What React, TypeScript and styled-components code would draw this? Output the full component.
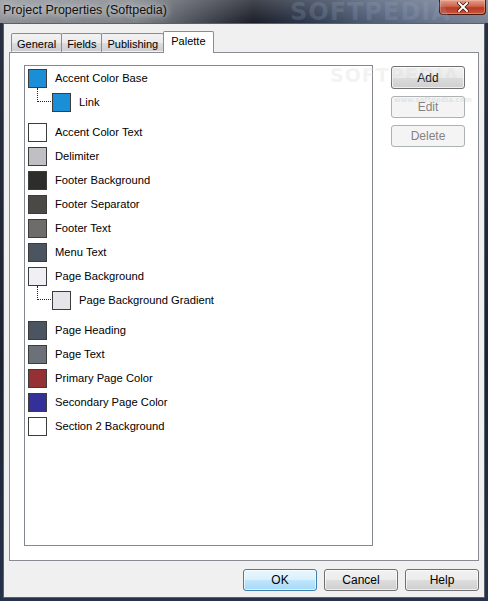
import React from 'react';
import styled, { createGlobalStyle } from 'styled-components';

const GlobalStyle = createGlobalStyle`
  html, body {
    margin: 0;
    padding: 0;
    background: #1e2536;
  }
  * {
    box-sizing: border-box;
  }
`;

type PaletteItem = {
  name: string;
  color: string;
  children?: PaletteItem[];
};

const palette: PaletteItem[] = [
  { name: 'Accent Color Base', color: '#1a8ed6', children: [{ name: 'Link', color: '#1a8ed6' }] },
  { name: 'Accent Color Text', color: '#ffffff' },
  { name: 'Delimiter', color: '#c0c0c4' },
  { name: 'Footer Background', color: '#2d2d2a' },
  { name: 'Footer Separator', color: '#4a4945' },
  { name: 'Footer Text', color: '#6d6c69' },
  { name: 'Menu Text', color: '#4b5562' },
  {
    name: 'Page Background',
    color: '#f0f0f4',
    children: [{ name: 'Page Background Gradient', color: '#e6e6ea' }],
  },
  { name: 'Page Heading', color: '#4b5562' },
  { name: 'Page Text', color: '#6c7179' },
  { name: 'Primary Page Color', color: '#973033' },
  { name: 'Secondary Page Color', color: '#33309a' },
  { name: 'Section 2 Background', color: '#ffffff' },
];

const tabs = ['General', 'Fields', 'Publishing', 'Palette'];

const Window = styled.div`
  position: relative;
  width: 488px;
  height: 601px;
  display: flex;
  flex-direction: column;
  overflow: hidden;
  font-family: 'Liberation Sans', Arial, sans-serif;
  background: linear-gradient(180deg, #2a3142 0%, #1c2230 60%, #26324a 100%);
`;

const TitleBar = styled.div`
  position: relative;
  height: 23px;
  flex: none;
  display: flex;
  align-items: flex-start;
  padding-left: 3px;
  background:
    linear-gradient(180deg, rgba(255, 255, 255, 0.18) 0%, rgba(255, 255, 255, 0) 100%),
    linear-gradient(
      90deg,
      #8e9196 0%,
      #7d8187 28%,
      #4a4e58 40%,
      #1b1e28 52%,
      #2b3548 62%,
      #4e5c74 76%,
      #66728a 88%,
      #7a8292 100%
    );
`;

const Title = styled.span`
  margin-top: 3px;
  font-size: 12.5px;
  color: #111;
  text-shadow: 0 0 6px rgba(230, 232, 236, 0.95), 0 0 10px rgba(230, 232, 236, 0.7);
  white-space: nowrap;
`;

const CloseButton = styled.div`
  margin-left: auto;
  margin-right: 2px;
  width: 47px;
  height: 15px;
  display: flex;
  align-items: center;
  justify-content: center;
  border: 1px solid #4a1710;
  border-top: none;
  border-radius: 0 0 4px 4px;
  background: linear-gradient(180deg, #e2a08e 0%, #d0634b 45%, #b93a24 55%, #c8553a 100%);
  box-shadow: inset 0 0 0 1px rgba(255, 200, 180, 0.4);
`;

const Client = styled.div`
  flex: 1;
  margin: 0 3px 3px 3px;
  display: flex;
  flex-direction: column;
  padding: 7px 5px 6px 5px;
  background: #f0f0f0;
  border: 1px solid #5a606c;
`;

const TabStrip = styled.div`
  display: flex;
  align-items: flex-end;
  height: 21px;
  padding-left: 2px;
  position: relative;
  z-index: 1;
`;

const Tab = styled.div<{ $active?: boolean }>`
  height: ${(p) => (p.$active ? '22px' : '19px')};
  margin-bottom: ${(p) => (p.$active ? '-1px' : '0')};
  margin-right: -1px;
  padding: ${(p) => (p.$active ? '3px 7px 0' : '4px 5px 0')};
  font-size: 11px;
  color: #000;
  border: 1px solid #898c95;
  border-bottom: ${(p) => (p.$active ? 'none' : '1px solid transparent')};
  border-radius: 2px 2px 0 0;
  background: ${(p) =>
    p.$active ? '#ffffff' : 'linear-gradient(180deg, #f2f2f2 0%, #ebebeb 50%, #dddddd 51%, #cfcfcf 100%)'};
  white-space: nowrap;
`;

const TabPage = styled.div`
  flex: 1;
  display: flex;
  gap: 18px;
  padding: 12px 12px 14px 14px;
  background: #ffffff;
  border: 1px solid #898c95;
`;

const ListBox = styled.div`
  width: 349px;
  flex: none;
  padding: 0 3px;
  background: #ffffff;
  border: 1px solid #828790;
`;

const Group = styled.div<{ $nested?: boolean }>`
  margin-bottom: ${(p) => (p.$nested ? '6px' : '0')};
`;

const Row = styled.div`
  height: 24px;
  display: flex;
  align-items: center;
  font-size: 11.2px;
  color: #000;
`;

const Connector = styled.span`
  align-self: flex-start;
  width: 14px;
  height: 14px;
  margin-top: -2px;
  margin-left: 9px;
  border-left: 1px dotted #222;
  border-bottom: 1px dotted #222;
`;

const Swatch = styled.span<{ $color: string; $child?: boolean }>`
  width: 19px;
  height: 19px;
  flex: none;
  margin-left: ${(p) => (p.$child ? '1px' : '0')};
  margin-right: 8px;
  background: ${(p) => p.$color};
  border: 1px solid #3c3c3c;
`;

const SideButtons = styled.div`
  display: flex;
  flex-direction: column;
  gap: 7px;
  padding-top: 1px;
`;

const Button = styled.button<{ $disabled?: boolean; $focus?: boolean; $default?: boolean }>`
  width: 74px;
  height: ${(p) => (p.$default ? '23px' : '22px')};
  padding: 0;
  font-family: 'Liberation Sans', Arial, sans-serif;
  font-size: 12px;
  color: ${(p) => (p.$disabled ? '#838383' : '#000')};
  border-radius: 3px;
  border: 1px solid ${(p) => (p.$disabled ? '#adb2b5' : p.$focus ? '#3c7fb1' : '#707070')};
  background: ${(p) =>
    p.$disabled
      ? '#f4f4f4'
      : p.$focus
      ? 'linear-gradient(180deg, #eaf6fd 0%, #d9f0fc 50%, #bee6fd 51%, #a7d9f5 100%)'
      : 'linear-gradient(180deg, #f2f2f2 0%, #ebebeb 50%, #dddddd 51%, #cfcfcf 100%)'};
  box-shadow: ${(p) =>
    p.$disabled ? 'none' : 'inset 0 0 0 1px rgba(255,255,255,0.65)'};
`;

const Footer = styled.div`
  display: flex;
  justify-content: flex-end;
  gap: 7px;
  margin-top: 8px;
`;

const Watermark = styled.div<{ $size: number; $color: string; $spacing?: number }>`
  position: absolute;
  font-family: 'DejaVu Sans', 'Liberation Sans', sans-serif;
  font-weight: bold;
  font-size: ${(p) => p.$size}px;
  letter-spacing: ${(p) => p.$spacing ?? 1}px;
  color: ${(p) => p.$color};
  pointer-events: none;
  white-space: nowrap;
`;

const CloseIcon = () => (
  <svg width="12" height="10" viewBox="0 0 12 10">
    <path d="M2 1 L10 9 M10 1 L2 9" stroke="#3a1008" strokeWidth="3.4" strokeLinecap="square" />
    <path d="M2 1 L10 9 M10 1 L2 9" stroke="#ffffff" strokeWidth="2" strokeLinecap="square" />
  </svg>
);

const PaletteRow = ({ item, child }: { item: PaletteItem; child?: boolean }) => (
  <Row>
    {child && <Connector />}
    <Swatch $color={item.color} $child={child} />
    {item.name}
  </Row>
);

export default function App() {
  return (
    <>
      <GlobalStyle />
      <Window>
        <TitleBar>
          <Title>Project Properties (Softpedia)</Title>
          <CloseButton>
            <CloseIcon />
          </CloseButton>
        </TitleBar>
        <Client>
          <TabStrip>
            {tabs.map((t) => (
              <Tab key={t} $active={t === 'Palette'}>
                {t}
              </Tab>
            ))}
          </TabStrip>
          <TabPage>
            <ListBox>
              {palette.map((item) => (
                <Group key={item.name} $nested={!!item.children}>
                  <PaletteRow item={item} />
                  {item.children?.map((c) => (
                    <PaletteRow key={c.name} item={c} child />
                  ))}
                </Group>
              ))}
            </ListBox>
            <SideButtons>
              <Button $default>Add</Button>
              <Button $disabled>Edit</Button>
              <Button $disabled>Delete</Button>
            </SideButtons>
          </TabPage>
          <Footer>
            <Button $focus>OK</Button>
            <Button>Cancel</Button>
            <Button>Help</Button>
          </Footer>
        </Client>
        <Watermark $size={24} $color="rgba(150, 170, 200, 0.22)" style={{ left: 290, top: -2 }}>
          SOFTPEDIA
        </Watermark>
        <Watermark $size={19} $color="rgba(215, 215, 215, 0.3)" style={{ left: 330, top: 64 }}>
          SOFTPEDIA
        </Watermark>
        <Watermark $size={7} $spacing={0} $color="rgba(200, 200, 200, 0.4)" style={{ left: 394, top: 96 }}>
          www.softpedia.com
        </Watermark>
      </Window>
    </>
  );
}
